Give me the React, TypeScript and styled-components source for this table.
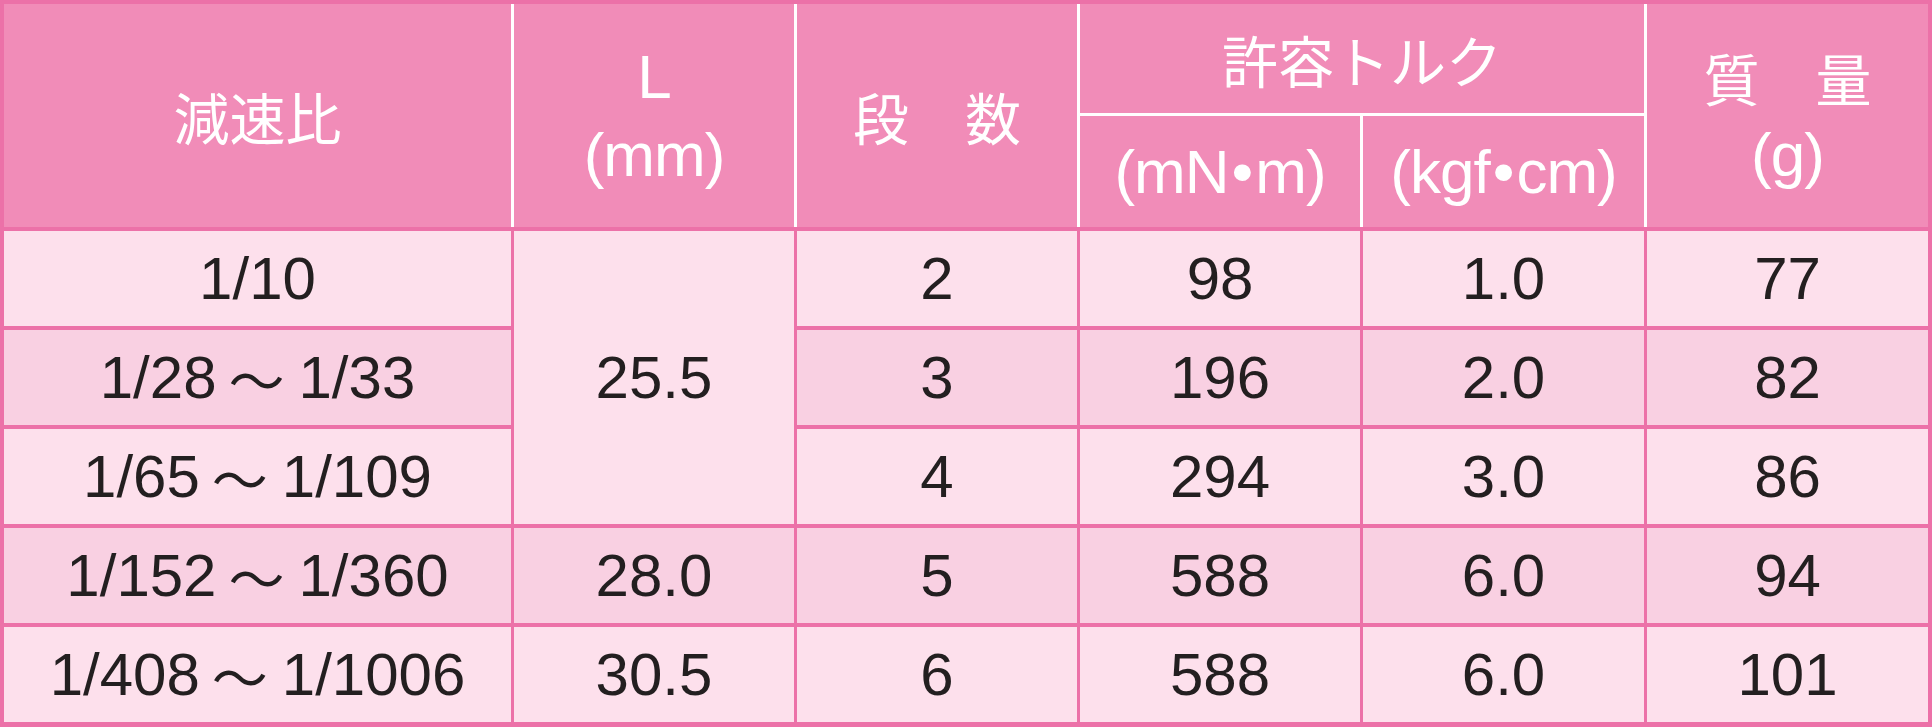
import React from 'react';
import styled, { createGlobalStyle } from 'styled-components';

type Row = {
  from: string;
  to?: string;
  length?: { value: string; span: number };
  stages: string;
  mNm: string;
  kgfcm: string;
  mass: string;
};

const rows: Row[] = [
  { from: '1/10', length: { value: '25.5', span: 3 }, stages: '2', mNm: '98', kgfcm: '1.0', mass: '77' },
  { from: '1/28', to: '1/33', stages: '3', mNm: '196', kgfcm: '2.0', mass: '82' },
  { from: '1/65', to: '1/109', stages: '4', mNm: '294', kgfcm: '3.0', mass: '86' },
  { from: '1/152', to: '1/360', length: { value: '28.0', span: 1 }, stages: '5', mNm: '588', kgfcm: '6.0', mass: '94' },
  { from: '1/408', to: '1/1006', length: { value: '30.5', span: 1 }, stages: '6', mNm: '588', kgfcm: '6.0', mass: '101' },
];

const App: React.FC = () => {
  return (
    <>
      <GlobalStyle />
      <Frame>
        <HeadGrid>
          <HeadCell $rows={2}>
            <Jp>減速比</Jp>
          </HeadCell>
          <HeadCell $rows={2}>
            <span>L</span>
            <span>(mm)</span>
          </HeadCell>
          <HeadCell $rows={2}>
            <Jp>段　数</Jp>
          </HeadCell>
          <HeadCell $cols={2}>
            <Jp>許容トルク</Jp>
          </HeadCell>
          <HeadCell $rows={2}>
            <Jp>質　量</Jp>
            <span>(g)</span>
          </HeadCell>
          <HeadCell>
            <span>
              (mN<Dot>•</Dot>m)
            </span>
          </HeadCell>
          <HeadCell>
            <span>
              (kgf<Dot>•</Dot>cm)
            </span>
          </HeadCell>
        </HeadGrid>

        <BodyGrid>
          {rows.map((r, i) => {
            const shade = i % 2 === 0 ? 'light' : 'dark';
            return (
              <React.Fragment key={r.from}>
                <BodyCell $shade={shade}>
                  {r.from}
                  {r.to && (
                    <>
                      <Wave>～</Wave>
                      {r.to}
                    </>
                  )}
                </BodyCell>
                {r.length && (
                  <BodyCell $shade={shade} $rows={r.length.span}>
                    {r.length.value}
                  </BodyCell>
                )}
                <BodyCell $shade={shade}>{r.stages}</BodyCell>
                <BodyCell $shade={shade}>{r.mNm}</BodyCell>
                <BodyCell $shade={shade}>{r.kgfcm}</BodyCell>
                <BodyCell $shade={shade}>{r.mass}</BodyCell>
              </React.Fragment>
            );
          })}
        </BodyGrid>
      </Frame>
    </>
  );
};

const GlobalStyle = createGlobalStyle`
  html, body {
    margin: 0;
    padding: 0;
    background: #ffffff;
  }
`;

const columns = '507px 280px 280px 280px 281px 281px';

const Frame = styled.div`
  width: 1932px;
  height: 727px;
  box-sizing: border-box;
  padding: 4px 4px 5px 4px;
  background-color: #ec71a8;
  display: flex;
  flex-direction: column;
  gap: 4px;
`;

const HeadGrid = styled.div`
  display: grid;
  grid-template-columns: ${columns};
  grid-template-rows: 109px 111px;
  gap: 3px;
  background-color: #ffffff;
`;

const HeadCell = styled.div<{ $rows?: number; $cols?: number }>`
  grid-row: span ${(p) => p.$rows ?? 1};
  grid-column: span ${(p) => p.$cols ?? 1};
  background-color: #f18cb8;
  color: #ffffff;
  display: flex;
  flex-direction: column;
  align-items: center;
  justify-content: center;
  font-family: 'Liberation Sans', 'Noto Sans CJK JP', sans-serif;
  font-size: 62px;
  line-height: 78px;
  letter-spacing: -1px;
  white-space: nowrap;
`;

const Jp = styled.span`
  font-family: 'Noto Sans CJK JP', sans-serif;
  font-size: 56px;
  letter-spacing: 0;
`;

const Dot = styled.span`
  margin: 0 3px;
`;

const BodyGrid = styled.div`
  display: grid;
  grid-template-columns: ${columns};
  grid-template-rows: repeat(5, 95px);
  column-gap: 3px;
  row-gap: 4px;
`;

const BodyCell = styled.div<{ $shade: 'light' | 'dark'; $rows?: number }>`
  grid-row: span ${(p) => p.$rows ?? 1};
  background-color: ${(p) => (p.$shade === 'light' ? '#fde0ec' : '#f9d0e2')};
  color: #231f20;
  display: flex;
  align-items: center;
  justify-content: center;
  font-family: 'Liberation Sans', Arial, sans-serif;
  font-size: 60px;
  white-space: nowrap;
`;

const Wave = styled.span`
  font-family: 'Noto Sans CJK JP', sans-serif;
  font-size: 56px;
  margin: 0 14px 0 12px;
`;

export default App;
